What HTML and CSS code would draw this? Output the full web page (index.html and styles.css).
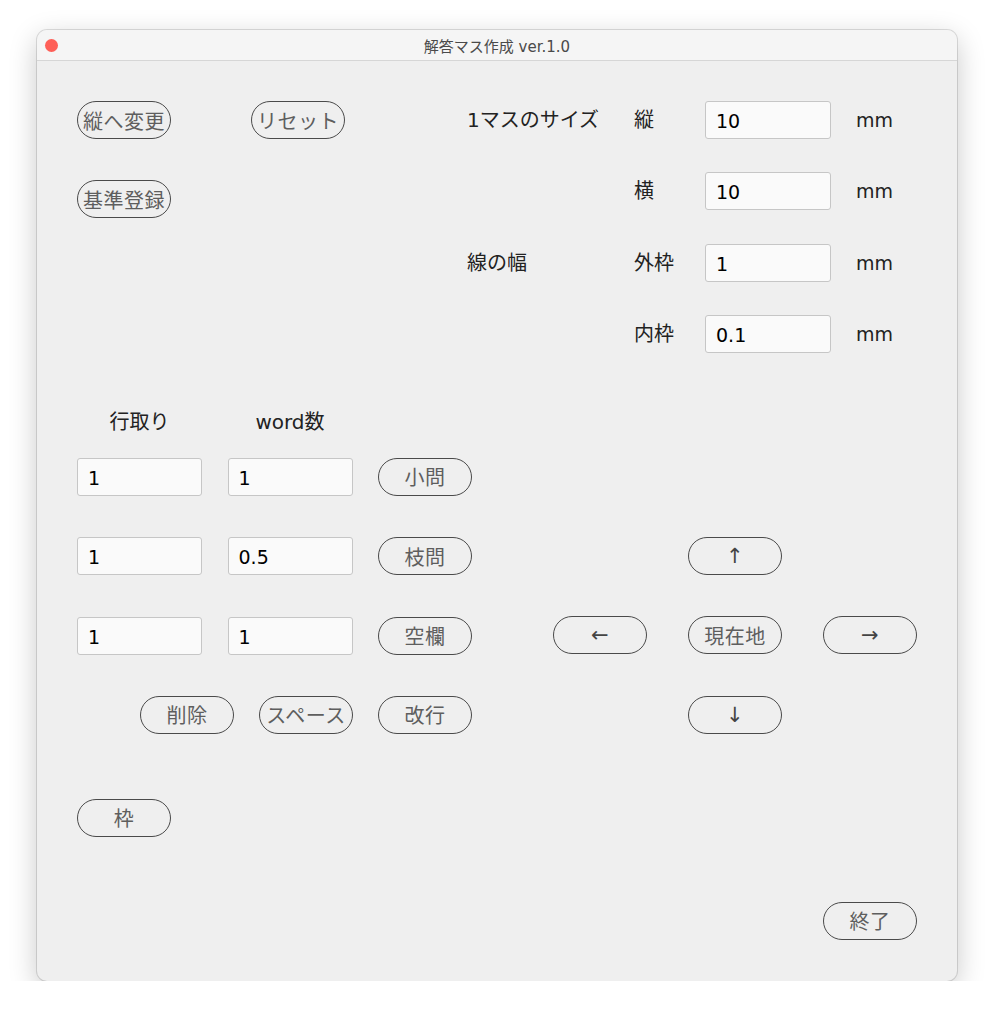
FILE: index.html
```html
<!DOCTYPE html>
<html lang="ja">
<head>
    <meta charset="UTF-8">
    <meta name="viewport" content="width=device-width, initial-scale=1.0">
    <title>解答マス作成 ver.1.0</title>
    <link rel="stylesheet" href="styles.css">
</head>
<body>
    <div class="window">
        <div class="titlebar">
            <span class="dot"></span>
            <span class="title">解答マス作成 ver.1.0</span>
        </div>

        <div class="content">
            <div class="upper">
                <div class="actions">
                    <button class="pill">縦へ変更</button>
                    <button class="pill">リセット</button>
                    <button class="pill">基準登録</button>
                </div>

                <div class="settings">
                    <span class="label">1マスのサイズ</span>
                    <span class="label">縦</span>
                    <input class="field" type="text" value="10">
                    <span class="unit">mm</span>

                    <span></span>
                    <span class="label">横</span>
                    <input class="field" type="text" value="10">
                    <span class="unit">mm</span>

                    <span class="label">線の幅</span>
                    <span class="label">外枠</span>
                    <input class="field" type="text" value="1">
                    <span class="unit">mm</span>

                    <span></span>
                    <span class="label">内枠</span>
                    <input class="field" type="text" value="0.1">
                    <span class="unit">mm</span>
                </div>
            </div>

            <div class="lower">
                <div class="entry">
                    <div class="heads">
                        <span class="label">行取り</span>
                        <span class="label">word数</span>
                    </div>
                    <div class="fields">
                        <input class="field" type="text" value="1">
                        <input class="field" type="text" value="1">
                        <button class="pill">小問</button>

                        <input class="field" type="text" value="1">
                        <input class="field" type="text" value="0.5">
                        <button class="pill">枝問</button>

                        <input class="field" type="text" value="1">
                        <input class="field" type="text" value="1">
                        <button class="pill">空欄</button>
                    </div>
                    <div class="edits">
                        <button class="pill">削除</button>
                        <button class="pill">スペース</button>
                        <button class="pill">改行</button>
                    </div>
                </div>

                <div class="pad">
                    <button class="pill arrow up">↑</button>
                    <button class="pill arrow left">←</button>
                    <button class="pill here">現在地</button>
                    <button class="pill arrow right">→</button>
                    <button class="pill arrow down">↓</button>
                </div>
            </div>

            <div class="frame-row">
                <button class="pill">枠</button>
            </div>

            <div class="footer">
                <button class="pill">終了</button>
            </div>
        </div>
    </div>
</body>
</html>
```

FILE: styles.css
```css
body {
    margin: 0;
    background-color: #ffffff;
    font-family: "DejaVu Sans", "Noto Sans CJK JP", sans-serif;
}

.window {
    width: 920px;
    margin: 30px 0 0 37px;
    background-color: #efefef;
    border-radius: 10px;
    overflow: hidden;
    box-shadow: 0 0 0 1px rgba(0, 0, 0, 0.12), 0 8px 28px rgba(0, 0, 0, 0.22);
}

.titlebar {
    height: 31px;
    display: flex;
    align-items: center;
    justify-content: center;
    position: relative;
    background-color: #f5f5f5;
    border-bottom: 1px solid #d6d6d6;
    box-sizing: border-box;
}

.dot {
    position: absolute;
    left: 8px;
    top: 9px;
    width: 13px;
    height: 13px;
    border-radius: 50%;
    background-color: #fe5f57;
}

.title {
    font-size: 15px;
    color: #4a4a4a;
}

.content {
    padding: 40px 40px 41px 40px;
}

.upper {
    display: flex;
    gap: 122px;
}

.actions {
    display: grid;
    grid-template-columns: 94px 94px;
    grid-auto-rows: 38px;
    column-gap: 80px;
    row-gap: 41px;
    align-content: start;
}

.settings {
    display: grid;
    grid-template-columns: 167px 71px 126px auto;
    grid-auto-rows: 38px;
    row-gap: 33.33px;
    align-items: center;
}

.label {
    font-size: 20px;
    line-height: 24px;
    color: #222222;
}

.unit {
    font-size: 19px;
    color: #222222;
    padding-left: 25px;
}

.field {
    box-sizing: border-box;
    width: 126px;
    height: 38px;
    margin: 0;
    padding: 2px 10px 0;
    border: 1px solid #c6c6c6;
    border-radius: 3px;
    background-color: #fafafa;
    font-family: inherit;
    font-size: 19px;
    color: #000000;
}

.pill {
    box-sizing: border-box;
    width: 94px;
    height: 38px;
    padding: 0;
    border: 1.6px solid #4a4a4a;
    border-radius: 19px;
    background-color: transparent;
    font-family: inherit;
    font-size: 20px;
    color: #5e5e5e;
    white-space: nowrap;
    letter-spacing: 0.5px;
}

.arrow {
    font-size: 21px;
    color: #444444;
}

.lower {
    display: flex;
    align-items: flex-end;
    gap: 81px;
    margin-top: 57px;
}

.heads {
    display: grid;
    grid-template-columns: 125px 125px;
    column-gap: 25.5px;
    text-align: center;
}

.fields {
    display: grid;
    grid-template-columns: 125px 125px 94px;
    grid-auto-rows: 38px;
    column-gap: 25.5px;
    row-gap: 41.5px;
    margin-top: 24px;
}

.fields .field {
    width: 125px;
}

.edits {
    display: flex;
    justify-content: flex-end;
    gap: 25px;
    margin-top: 41px;
}

.pad {
    display: grid;
    grid-template-columns: 94px 94px 94px;
    grid-template-rows: 38px 38px 38px;
    grid-template-areas:
        ". up ."
        "left here right"
        ". down .";
    column-gap: 41px;
    row-gap: 41.5px;
}

.pad .up { grid-area: up; }
.pad .left { grid-area: left; }
.pad .here { grid-area: here; }
.pad .right { grid-area: right; }
.pad .down { grid-area: down; }

.frame-row {
    margin-top: 65px;
}

.footer {
    display: flex;
    justify-content: flex-end;
    margin-top: 65px;
}
```
